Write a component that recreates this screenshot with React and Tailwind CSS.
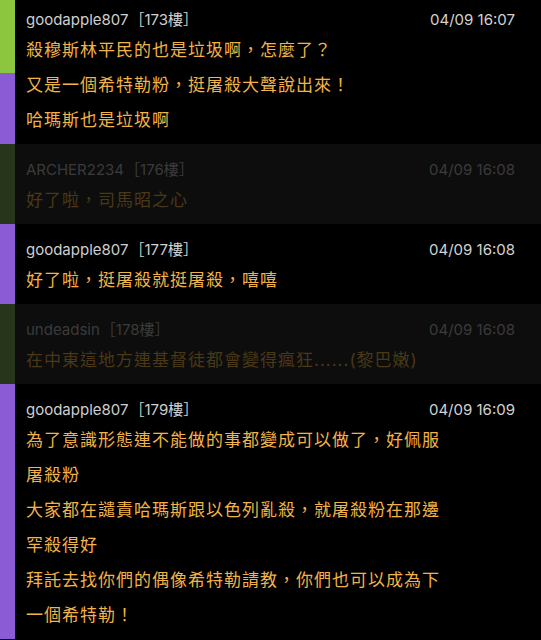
import React from 'react';

const comments = [
  {
    user: 'goodapple807',
    floor: 173,
    time: '04/09 16:07',
    bar: ['bg-[#8cc63f]', 'bg-[#8b5bd5]'],
    lines: ['殺穆斯林平民的也是垃圾啊，怎麼了？', '又是一個希特勒粉，挺屠殺大聲說出來！', '哈瑪斯也是垃圾啊'],
  },
  {
    user: 'ARCHER2234',
    floor: 176,
    time: '04/09 16:08',
    dim: true,
    lines: ['好了啦，司馬昭之心'],
  },
  {
    user: 'goodapple807',
    floor: 177,
    time: '04/09 16:08',
    lines: ['好了啦，挺屠殺就挺屠殺，嘻嘻'],
  },
  {
    user: 'undeadsin',
    floor: 178,
    time: '04/09 16:08',
    dim: true,
    lines: ['在中東這地方連基督徒都會變得瘋狂......(黎巴嫩)'],
  },
  {
    user: 'goodapple807',
    floor: 179,
    time: '04/09 16:09',
    lines: [
      '為了意識形態連不能做的事都變成可以做了，好佩服',
      '屠殺粉',
      '大家都在譴責哈瑪斯跟以色列亂殺，就屠殺粉在那邊',
      '罕殺得好',
      '拜託去找你們的偶像希特勒請教，你們也可以成為下',
      '一個希特勒！',
    ],
  },
];

const font = { fontFamily: 'Inter, "Noto Sans CJK TC", sans-serif' };

const Comment = ({ c, first }) => {
  const dim = c.dim;
  return (
    <div className={`flex ${dim ? 'bg-[#0d0d0d]' : 'bg-black'} ${first ? '-mt-[6px]' : ''}`}>
      {/* colour strip */}
      <div className="w-[15px] flex flex-col shrink-0">
        {c.bar ? (
          <>
            <div className={`h-[79px] ${c.bar[0]}`} />
            <div className={`flex-1 ${c.bar[1]}`} />
          </>
        ) : (
          <div className={`flex-1 ${dim ? 'bg-[#27361a]' : 'bg-[#8b5bd5]'}`} />
        )}
      </div>
      <div className="flex-1 pl-[11px] pr-[26px] pt-[15px] pb-[6px]">
        <div className="flex justify-between items-center leading-[22px] text-[15px]">
          <span className={dim ? 'text-[#3b3b3b]' : 'text-[#cfcfcf]'}>
            {c.user}
            <span className="ml-[1px]">［{c.floor}樓］</span>
          </span>
          <span className={dim ? 'text-[#3b3b3b]' : 'text-[#d2d2d2]'}>{c.time}</span>
        </div>
        <div className="mt-[2px]">
          {c.lines.map((l, i) => (
            <p
              key={i}
              className={`text-[17px] leading-[35px] tracking-[1px] ${dim ? 'text-[#4a3817]' : 'text-[#f2b347]'}`}
            >
              {l}
            </p>
          ))}
        </div>
      </div>
    </div>
  );
};

export default function App() {
  return (
    <div className="w-[541px] h-[640px] overflow-hidden bg-black" style={font}>
      {comments.map((c, i) => (
        <Comment key={i} c={c} first={i === 0} />
      ))}
    </div>
  );
}
